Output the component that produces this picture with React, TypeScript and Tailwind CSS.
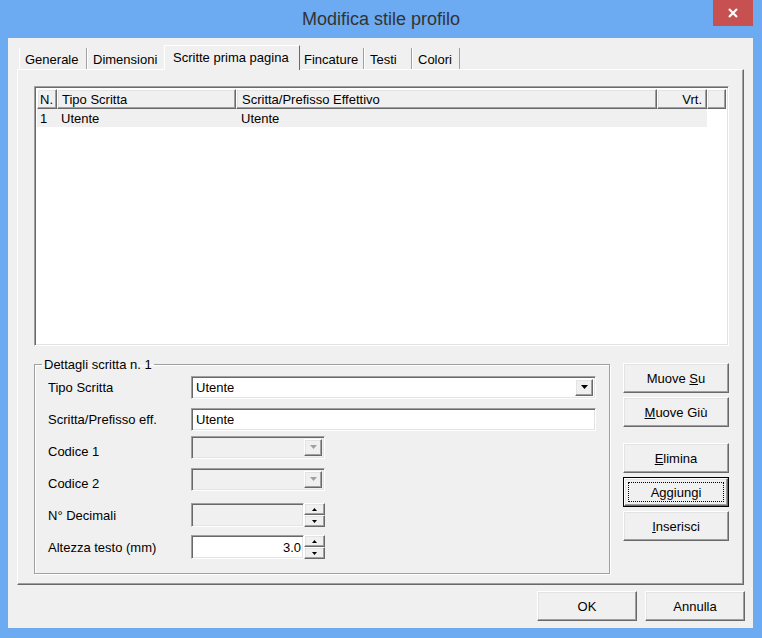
import React from 'react';

const raised =
  'bg-[#f0f0f0] border border-t-white border-l-white border-r-[#696969] border-b-[#696969] shadow-[inset_-1px_-1px_0_#a0a0a0,inset_1px_1px_0_#e3e3e3]';
const sunken =
  'border border-t-[#a0a0a0] border-l-[#a0a0a0] border-r-white border-b-white shadow-[inset_1px_1px_0_#696969,inset_-1px_-1px_0_#e3e3e3]';

type Tab = { label: string; w: string; active?: boolean };

const tabs: Tab[] = [
  { label: 'Generale', w: 'w-[68px]' },
  { label: 'Dimensioni', w: 'w-[79px]' },
  { label: 'Scritte prima pagina', w: 'w-[136px]', active: true },
  { label: 'Fincature', w: 'w-[66px]' },
  { label: 'Testi', w: 'w-[48px]' },
  { label: 'Colori', w: 'w-[48px]' },
];

function Arrow({ up, gray, small }: { up?: boolean; gray?: boolean; small?: boolean }) {
  const color = gray ? '#a0a0a0' : '#000';
  if (small) {
    return (
      <svg width="5" height="3" viewBox="0 0 5 3">
        <polygon points={up ? '2.5,0 5,3 0,3' : '0,0 5,0 2.5,3'} fill={color} />
      </svg>
    );
  }
  return (
    <svg width="7" height="4" viewBox="0 0 7 4">
      <polygon points="0,0 7,0 3.5,4" fill={color} />
    </svg>
  );
}

function Combo({ value, w, disabled }: { value?: string; w: string; disabled?: boolean }) {
  return (
    <div className={`${sunken} ${w} h-[23px] flex items-stretch p-[2px] ${disabled ? 'bg-[#f0f0f0]' : 'bg-white'}`}>
      <div className="flex-1 flex items-center pl-[2px]">{value}</div>
      <div className={`${raised} w-[18px] flex items-center justify-center`}>
        <Arrow gray={disabled} />
      </div>
    </div>
  );
}

function Spin({ value, disabled }: { value?: string; disabled?: boolean }) {
  return (
    <div className="flex h-[24px]">
      <div
        className={`${sunken} w-[113px] flex items-center justify-end pr-[2px] ${disabled ? 'bg-[#f0f0f0]' : 'bg-white'}`}
      >
        {value}
      </div>
      <div className="w-[21px] flex flex-col">
        <div className={`${raised} flex-1 flex items-center justify-center`}>
          <Arrow up small />
        </div>
        <div className={`${raised} flex-1 flex items-center justify-center`}>
          <Arrow small />
        </div>
      </div>
    </div>
  );
}

function Btn({ children, def, w = 'w-[106px]' }: { children: React.ReactNode; def?: boolean; w?: string }) {
  if (def) {
    return (
      <div className={`${w} h-[30px] border border-black flex`}>
        <div className={`${raised} flex-1 flex items-center justify-center p-[3px]`}>
          <div className="flex-1 self-stretch flex items-center justify-center border border-dotted border-black">
            {children}
          </div>
        </div>
      </div>
    );
  }
  return <div className={`${raised} ${w} h-[30px] flex items-center justify-center`}>{children}</div>;
}

function Row({ label, children }: { label: string; children: React.ReactNode }) {
  return (
    <div className="h-[32px] flex items-center">
      <div className="w-[156px] pl-[13px]">{label}</div>
      {children}
    </div>
  );
}

export default function App() {
  return (
    <div
      className="w-[762px] h-[638px] bg-[#6caaf1] flex flex-col text-[13px] text-black leading-none"
      style={{ fontFamily: '"Liberation Sans", Arial, sans-serif' }}
    >
      {/* title bar */}
      <div className="h-[38px] grid grid-cols-[49px_1fr_49px]">
        <div />
        <div className="flex items-center justify-center text-[18px] text-[#333] pb-[1px]">
          Modifica stile profilo
        </div>
        <div className="flex">
          <div className="w-[40px] h-[26px] bg-[#c75050] flex items-center justify-center">
            <svg width="10" height="10" viewBox="0 0 10 10">
              <path d="M1 1 L9 9 M9 1 L1 9" stroke="#fff" strokeWidth="2.2" />
            </svg>
          </div>
        </div>
      </div>

      {/* client area */}
      <div className="flex-1 ml-[8px] mr-[9px] mb-[10px] bg-[#f0f0f0] flex flex-col">
        {/* tabs */}
        <div className="mt-[7px] ml-[11px] h-[24px] flex items-end">
          {tabs.map((t) =>
            t.active ? (
              <div
                key={t.label}
                className={`${t.w} h-[25px] -mx-[2px] -mb-px relative z-10 bg-[#f0f0f0] border-l border-t border-l-white border-t-white border-r border-r-[#696969] pl-[8px] pt-[5px]`}
              >
                {t.label}
              </div>
            ) : (
              <div
                key={t.label}
                className={`${t.w} h-[21px] border-l border-l-white border-r border-r-[#a0a0a0] pl-[5px] pt-[5px]`}
              >
                {t.label}
              </div>
            ),
          )}
        </div>

        {/* tab page */}
        <div className="ml-[9px] w-[727px] h-[516px] border border-t-white border-l-white border-r-[#696969] border-b-[#696969] shadow-[inset_-1px_-1px_0_#a0a0a0] pl-[16px] pt-[16px]">
          {/* list view */}
          <div className={`${sunken} w-[695px] h-[260px] bg-white p-[2px] flex flex-col`}>
            <div className="h-[20px] flex">
              <div className={`${raised} w-[20px] flex items-center pl-[2px]`}>N.</div>
              <div className={`${raised} w-[179px] flex items-center pl-[4px]`}>Tipo Scritta</div>
              <div className={`${raised} w-[421px] flex items-center pl-[5px]`}>Scritta/Prefisso Effettivo</div>
              <div className={`${raised} w-[50px] flex items-center justify-end pr-[4px]`}>Vrt.</div>
              <div className={`${raised} flex-1`} />
            </div>
            <div className="h-[18px] w-[670px] bg-[#f0f0f0] flex items-center">
              <div className="w-[20px] pl-[3px]">1</div>
              <div className="w-[179px] pl-[4px]">Utente</div>
              <div className="pl-[5px]">Utente</div>
            </div>
          </div>

          {/* bottom section */}
          <div className="mt-[12px] flex">
            <fieldset className="w-[576px] h-[216px] border border-[#a0a0a0] shadow-[inset_1px_1px_0_#fff,1px_1px_0_#fff] pb-[9px]">
              <legend className="ml-[7px] px-[2px] leading-[13px]">Dettagli scritta n. 1</legend>
              <Row label="Tipo Scritta">
                <Combo value="Utente" w="w-[405px]" />
              </Row>
              <Row label="Scritta/Prefisso eff.">
                <div className={`${sunken} w-[405px] h-[23px] bg-white flex items-center pl-[4px]`}>Utente</div>
              </Row>
              <Row label="Codice 1">
                <div className="mb-[8px]">
                  <Combo w="w-[134px]" disabled />
                </div>
              </Row>
              <Row label="Codice 2">
                <div className="mb-[8px]">
                  <Combo w="w-[134px]" disabled />
                </div>
              </Row>
              <Row label="N° Decimali">
                <Spin disabled />
              </Row>
              <Row label="Altezza testo (mm)">
                <Spin value="3.0" />
              </Row>
            </fieldset>

            <div className="ml-[13px] mt-[5px] flex flex-col gap-[4px]">
              <Btn>
                <span>
                  Muove <u>S</u>u
                </span>
              </Btn>
              <Btn>
                <span>
                  <u>M</u>uove Giù
                </span>
              </Btn>
              <div className="h-[8px]" />
              <Btn>
                <span>
                  <u>E</u>limina
                </span>
              </Btn>
              <Btn def>
                <span>
                  A<u>g</u>giungi
                </span>
              </Btn>
              <Btn>
                <span>
                  <u>I</u>nserisci
                </span>
              </Btn>
            </div>
          </div>
        </div>

        {/* dialog buttons */}
        <div className="mt-[6px] pr-[8px] flex justify-end gap-[8px]">
          <Btn w="w-[100px]">OK</Btn>
          <Btn w="w-[100px]">Annulla</Btn>
        </div>
      </div>
    </div>
  );
}
